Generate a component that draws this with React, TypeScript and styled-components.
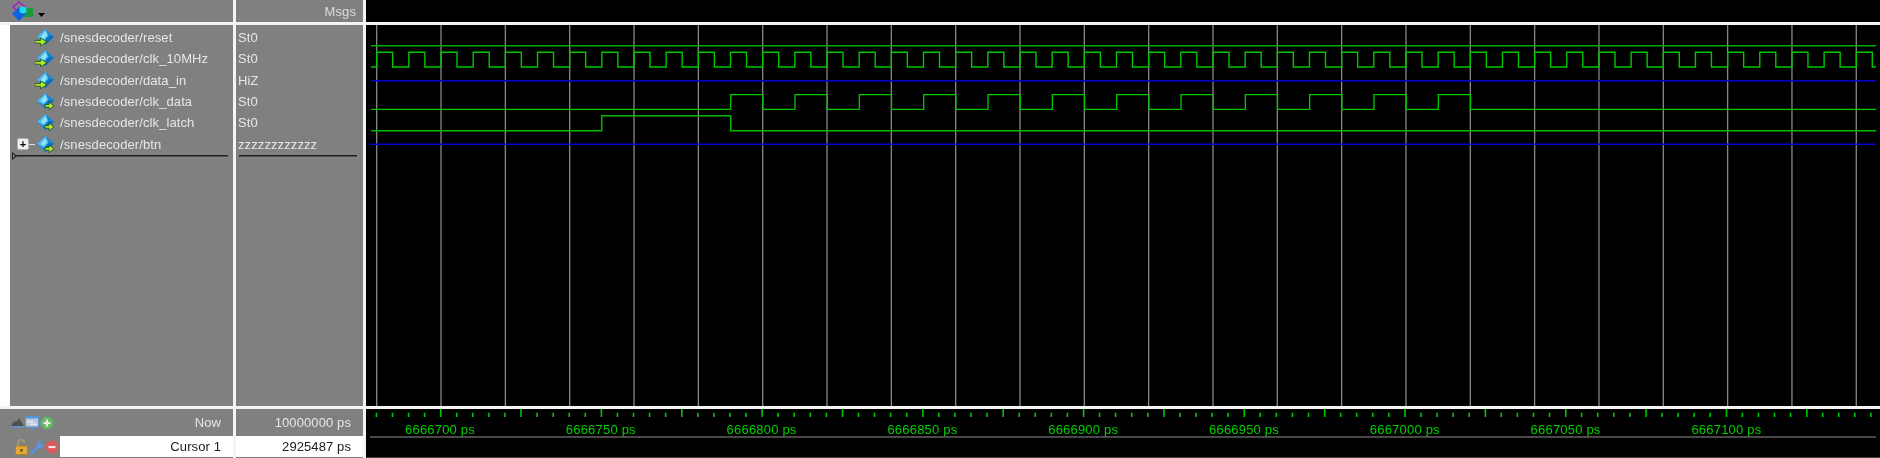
import React from "react";
import styled, { createGlobalStyle } from "styled-components";

interface SignalType {
  name: string;
  value: string;
  dir: "in" | "out";
  expandable?: boolean;
}

const signals: SignalType[] = [
  { name: "/snesdecoder/reset", value: "St0", dir: "in" },
  { name: "/snesdecoder/clk_10MHz", value: "St0", dir: "in" },
  { name: "/snesdecoder/data_in", value: "HiZ", dir: "in" },
  { name: "/snesdecoder/clk_data", value: "St0", dir: "out" },
  { name: "/snesdecoder/clk_latch", value: "St0", dir: "out" },
  { name: "/snesdecoder/btn", value: "zzzzzzzzzzzz", dir: "out", expandable: true },
];

const WAVE_START = 371;
const WAVE_END = 1876;
const GRID_STEP = 64.33;
const GREEN = "#00c800";
const BLUE = "#0000d0";

const gridLines = Array.from({ length: 24 }, (_, i) => 376.7 + i * GRID_STEP);

const buildClock = () => {
  let d = `M${WAVE_START} 67 H376.7`;
  for (let i = 0; i < 47; i++) {
    const rise = 376.7 + i * (GRID_STEP / 2);
    d += ` V52.3 H${rise + 16} V67 H${Math.min(rise + GRID_STEP / 2, WAVE_END)}`;
  }
  return d;
};

const buildClkData = () => {
  let d = `M${WAVE_START} 109.3`;
  for (let i = 0; i < 12; i++) {
    const rise = 730.7 + i * GRID_STEP;
    d += ` H${rise} V94.7 H${rise + 32.2} V109.3`;
  }
  return `${d} H${WAVE_END}`;
};

const majorTicks = Array.from({ length: 18 }, (_, i) => 440.7 + i * 80.36);
const minorTicks = Array.from({ length: 94 }, (_, i) => 376.4 + i * 16.07).filter(
  (_, i) => (i + 1) % 5 !== 0 || i === 93
);

const axisLabels = [
  "6666700 ps",
  "6666750 ps",
  "6666800 ps",
  "6666850 ps",
  "6666900 ps",
  "6666950 ps",
  "6667000 ps",
  "6667050 ps",
  "6667100 ps",
];

const GlobalStyle = createGlobalStyle`
  html, body {
    margin: 0;
    padding: 0;
    background: #000;
  }
`;

const Window = styled.div`
  display: grid;
  grid-template-columns: 233px 127px 1fr;
  grid-template-rows: 22px 381px 49px;
  gap: 3px;
  width: 1880px;
  height: 458px;
  overflow: hidden;
  background: #f4f4f4;
  font-family: "Liberation Sans", Arial, sans-serif;
  font-size: 13px;
  letter-spacing: 0.1px;
  color: #e6e6e6;
  filter: blur(0.3px);
`;

const Head = styled.div`
  display: flex;
  align-items: center;
  background: #808080;
`;

const ToolHead = styled(Head)`
  padding-left: 12px;
  gap: 4px;
`;

const MsgsHead = styled(Head)`
  justify-content: flex-end;
  padding-right: 7px;
  color: #dcdcdc;
`;

const BlackHead = styled.div`
  background: #000;
`;

const NamePanel = styled.div`
  background: #808080;
  border-left: 10px solid #fff;
  padding-top: 2px;
`;

const ValuePanel = styled.div`
  background: #808080;
  padding-top: 2px;
`;

const SignalRow = styled.div`
  display: flex;
  align-items: center;
  height: 21.3px;
  white-space: nowrap;
`;

const NameRow = styled(SignalRow)`
  padding-left: 7px;
`;

const ValueRow = styled(SignalRow)`
  padding-left: 2px;
`;

const ExpandSlot = styled.div`
  display: flex;
  align-items: center;
  width: 18px;
  flex: none;
`;

const ExpandBox = styled.div`
  display: flex;
  align-items: center;
  justify-content: center;
  width: 12px;
  height: 12px;
  flex: none;
  background: #f0f0f0;
  border: 1px solid #b0b0b0;
  box-sizing: border-box;
  border-radius: 2px;
  color: #000;
  font-size: 11px;
  font-weight: bold;
  line-height: 1;
`;

const ExpandStub = styled.div`
  flex: 1;
  height: 1px;
  background: #e0e0e0;
`;

const SignalName = styled.span`
  margin-left: 6px;
`;

const NameRule = styled.div`
  position: relative;
  height: 1px;
  margin: 0 5px 0 2px;
  background: #202020;
  border-bottom: 1px solid #505050;

  &::before {
    content: "";
    position: absolute;
    left: 0;
    top: -3px;
    border-left: 5px solid #181818;
    border-top: 4px solid transparent;
    border-bottom: 4px solid transparent;
  }

  &::after {
    content: "";
    position: absolute;
    left: 1px;
    top: -1px;
    border-left: 2px solid #909090;
    border-top: 2px solid transparent;
    border-bottom: 2px solid transparent;
  }
`;

const ValueRule = styled.div`
  height: 1px;
  margin: 0 6px 0 3px;
  background: #202020;
  border-bottom: 1px solid #505050;
`;

const WaveCell = styled.div`
  background: #000;
  overflow: hidden;
`;

const Chart = styled.svg`
  display: block;
`;

const FooterColumn = styled.div`
  display: flex;
  flex-direction: column;
  background: #808080;
`;

const NowRow = styled.div`
  display: flex;
  align-items: center;
  justify-content: space-between;
  height: 27px;
  padding: 0 12px 0 11px;
`;

const CursorRow = styled.div`
  display: flex;
  align-items: stretch;
  height: 21px;
`;

const CursorTools = styled.div`
  display: flex;
  align-items: center;
  gap: 1px;
  flex: none;
  width: 45px;
  padding-left: 15px;
`;

const CursorField = styled.div`
  flex: 1;
  display: flex;
  align-items: center;
  justify-content: flex-end;
  padding-right: 12px;
  background: #fff;
  color: #202020;
`;

const NowTools = styled.div`
  display: flex;
  align-items: center;
  gap: 1px;
`;

const RightText = styled.div`
  display: flex;
  align-items: center;
  justify-content: flex-end;
  height: 27px;
  padding-right: 12px;
`;

const AxisText = styled.text`
  font-family: "Liberation Sans", Arial, sans-serif;
  font-size: 13px;
  letter-spacing: 0.2px;
  fill: #00d000;
`;

const SignalIcon: React.FC<{ dir: "in" | "out" }> = ({ dir }) => (
  <svg width="19" height="17" viewBox="0 0 19 17" style={{ flex: "none" }}>
    <polygon points="10.5,0 19,7.5 10.5,16 2,8" fill="#1488d4" />
    <polygon points="10.5,0 2,8 9,12 13.5,7" fill="#48bcec" />
    <polygon points="10.5,2 5.5,8 9,10 12,6.5" fill="#96e0f8" />
    <polygon points="10.5,16 19,7.5 13.5,7 9,12" fill="#0c70bc" />
    {dir === "in" ? (
      <polygon points="0,11.5 5.5,11.5 5.5,9 12,12.8 5.5,16.8 5.5,14.2 0,14.2" fill="#b4e828" stroke="#145010" strokeWidth="0.8" />
    ) : (
      <polygon points="10,11.5 14,11.5 14,9 19,12.8 14,16.8 14,14.2 10,14.2" fill="#b4e828" stroke="#145010" strokeWidth="0.8" />
    )}
  </svg>
);

const Logo = () => (
  <svg width="22" height="20" viewBox="0 0 22 20" style={{ flex: "none" }}>
    <polygon points="7,1 13,6 7,11 1,6" fill="none" stroke="#a020c8" strokeWidth="1.6" />
    <rect x="12" y="7" width="9" height="9" fill="#1a9a3c" />
    <polygon points="7,6 14,13 7,20 0,13" fill="#1060e0" />
    <circle cx="11" cy="9" r="3.6" fill="#20d8f0" />
  </svg>
);

const DropArrow = () => (
  <svg width="7" height="4" viewBox="0 0 7 4" style={{ marginTop: 7 }}>
    <polygon points="0,0 7,0 3.5,4" fill="#000" />
  </svg>
);

const MountainIcon = () => (
  <svg width="13" height="11" viewBox="0 0 13 11">
    <polygon points="0,9 4,2 6,5 8,1 13,9" fill="#505050" />
    <polygon points="4,2 5,3.5 3,5" fill="#a0a0a0" />
    <rect x="0" y="9" width="13" height="1.5" fill="#5a94d8" />
  </svg>
);

const PanelIcon = () => (
  <svg width="14" height="14" viewBox="0 0 14 14">
    <rect x="0.5" y="0.5" width="13" height="10.5" fill="#b8c8dc" stroke="#5a94d8" />
    <rect x="0" y="0" width="14" height="2.5" fill="#5a94d8" />
    <rect x="2" y="5" width="6" height="1.5" fill="#e8e8e8" />
    <rect x="5" y="7.5" width="7" height="1.5" fill="#e8e8e8" />
    <polygon points="5,11 9,11 7,14" fill="#5a94d8" />
  </svg>
);

const RoundIcon: React.FC<{ fill: string; plus?: boolean }> = ({ fill, plus }) => (
  <svg width="14" height="14" viewBox="0 0 14 14">
    <circle cx="7" cy="7" r="6.5" fill={fill} />
    <rect x="3.5" y="5.9" width="7" height="2.2" fill="#e8e8e8" />
    {plus && <rect x="5.9" y="3.5" width="2.2" height="7" fill="#e8e8e8" />}
  </svg>
);

const LockIcon = () => (
  <svg width="13" height="16" viewBox="0 0 13 16">
    <path d="M3 7 V4 a3.2 3.2 0 0 1 6.4 0" fill="none" stroke="#a89878" strokeWidth="1.6" />
    <rect x="0.5" y="7" width="12" height="8.5" fill="#e0a838" stroke="#b88020" />
    <rect x="5.2" y="10" width="2.6" height="2.6" fill="#805010" />
  </svg>
);

const WrenchIcon = () => (
  <svg width="15" height="16" viewBox="0 0 15 16">
    <path d="M1 13.5 L8 6.5 C7.4 4 9.5 0.8 13.5 1.2 L10.8 4 L12 6 L14.6 4 C15 8 12 10 9.4 9 L3 15.4 Z" fill="#5a94e0" />
  </svg>
);

const App: React.FC = () => {
  return (
    <Window>
      <GlobalStyle />
      <ToolHead>
        <Logo />
        <DropArrow />
      </ToolHead>
      <MsgsHead>Msgs</MsgsHead>
      <BlackHead />

      <NamePanel>
        {signals.map((el: SignalType) => (
          <NameRow key={el.name}>
            <ExpandSlot>
              {el.expandable && (
                <>
                  <ExpandBox>+</ExpandBox>
                  <ExpandStub />
                </>
              )}
            </ExpandSlot>
            <SignalIcon dir={el.dir} />
            <SignalName>{el.name}</SignalName>
          </NameRow>
        ))}
        <NameRule />
      </NamePanel>
      <ValuePanel>
        {signals.map((el: SignalType) => (
          <ValueRow key={el.name}>{el.value}</ValueRow>
        ))}
        <ValueRule />
      </ValuePanel>
      <WaveCell>
        <Chart width="1514" height="381" viewBox="366 25 1514 381">
          {gridLines.map((x) => (
            <line key={x} x1={x} x2={x} y1="25" y2="406" stroke="#888" strokeWidth="1.3" />
          ))}
          <line x1={WAVE_START} x2={WAVE_END} y1="45.7" y2="45.7" stroke="#00b000" strokeWidth="1.4" />
          <path d={buildClock()} fill="none" stroke={GREEN} strokeWidth="1.4" />
          <line x1={WAVE_START} x2={WAVE_END} y1="80.7" y2="80.7" stroke={BLUE} strokeWidth="1.6" />
          <path d={buildClkData()} fill="none" stroke={GREEN} strokeWidth="1.3" />
          <path
            d={`M${WAVE_START} 130.7 H601.7 V115.7 H730.7 V130.7 H${WAVE_END}`}
            fill="none"
            stroke="#00b800"
            strokeWidth="1.5"
          />
          <line x1="370" x2={WAVE_END} y1="144.3" y2="144.3" stroke={BLUE} strokeWidth="1.5" />
        </Chart>
      </WaveCell>

      <FooterColumn>
        <NowRow>
          <NowTools>
            <MountainIcon />
            <PanelIcon />
            <RoundIcon fill="#62b862" plus />
          </NowTools>
          Now
        </NowRow>
        <CursorRow>
          <CursorTools>
            <LockIcon />
            <WrenchIcon />
            <RoundIcon fill="#dc5a5a" />
          </CursorTools>
          <CursorField>Cursor 1</CursorField>
        </CursorRow>
      </FooterColumn>
      <FooterColumn>
        <RightText>10000000 ps</RightText>
        <CursorRow>
          <CursorField>2925487 ps</CursorField>
        </CursorRow>
      </FooterColumn>
      <WaveCell>
        <Chart width="1514" height="49" viewBox="366 409 1514 49">
          {majorTicks.map((x) => (
            <line key={x} x1={x} x2={x} y1="409" y2="417" stroke={GREEN} strokeWidth="1.6" />
          ))}
          {minorTicks.map((x) => (
            <line key={x} x1={x} x2={x} y1="412.7" y2="417" stroke={GREEN} strokeWidth="1.6" />
          ))}
          {axisLabels.map((label, i) => (
            <AxisText key={label} x={440 + i * 160.8} y="434" textAnchor="middle">
              {label}
            </AxisText>
          ))}
          <line x1="370" x2={WAVE_END} y1="437" y2="437" stroke="#606060" strokeWidth="1.4" />
          <line x1="366" x2="1880" y1="457.5" y2="457.5" stroke="#404040" strokeWidth="1" />
        </Chart>
      </WaveCell>
    </Window>
  );
};

export default App;
